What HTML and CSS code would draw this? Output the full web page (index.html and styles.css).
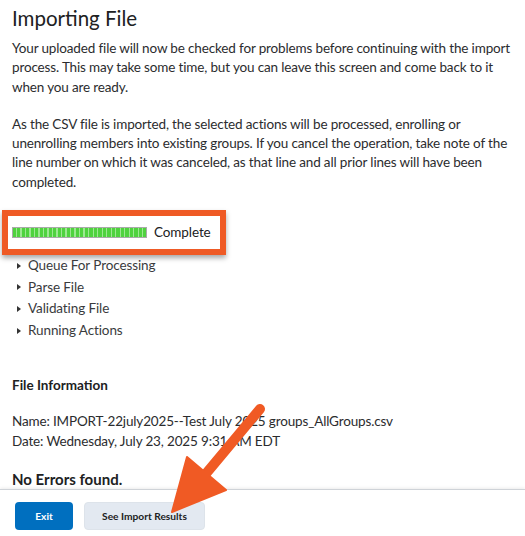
FILE: index.html
```html
<!DOCTYPE html>
<html>
<head>
<meta charset="utf-8">
<link rel="stylesheet" href="styles.css">
</head>
<body>
<div class="page">
  <main class="content">
    <h1 class="title">Importing File</h1>
    <p class="para">Your uploaded file will now be checked for problems before continuing with the import process. This may take some time, but you can leave this screen and come back to it when you are ready.</p>
    <p class="para para-2">As the CSV file is imported, the selected actions will be processed, enrolling or unenrolling members into existing groups. If you cancel the operation, take note of the line number on which it was canceled, as that line and all prior lines will have been completed.</p>
    <div class="status-box">
      <div class="progress"><div class="progress-fill"></div></div>
      <span class="status-text">Complete</span>
    </div>
    <ul class="steps">
      <li class="step"><span class="caret"></span>Queue For Processing</li>
      <li class="step"><span class="caret"></span>Parse File</li>
      <li class="step"><span class="caret"></span>Validating File</li>
      <li class="step"><span class="caret"></span>Running Actions</li>
    </ul>
    <h2 class="section-title">File Information</h2>
    <div class="info">
      <div class="info-line">Name: IMPORT-22july2025--Test July 2025 groups_AllGroups.csv</div>
      <div class="info-line">Date: Wednesday, July 23, 2025 9:31 AM EDT</div>
    </div>
    <h3 class="no-errors">No Errors found.</h3>
  </main>
  <footer class="footer">
    <button class="btn btn-primary">Exit</button>
    <button class="btn btn-secondary">See Import Results</button>
  </footer>
  <svg class="arrow" width="525" height="536" viewBox="0 0 525 536" aria-hidden="true">
    <line x1="260" y1="409" x2="204" y2="476" stroke="#f05a24" stroke-width="10" stroke-linecap="round"/>
    <polygon points="187,457 226,490 172,512" fill="#f05a24" stroke="#f05a24" stroke-width="2" stroke-linejoin="round"/>
  </svg>
</div>
</body>
</html>
```

FILE: styles.css
```css
html, body {
  margin: 0;
  padding: 0;
  background: #ffffff;
}

body {
  font-family: Lato, "Noto Sans", sans-serif;
  color: #2b2c2e;
  width: 525px;
  height: 536px;
  overflow: hidden;
}

.page {
  position: relative;
  width: 525px;
  height: 536px;
  display: flex;
  flex-direction: column;
}

.content {
  padding: 4px 12px 0 12px;
  flex: 1;
  min-height: 0;
}

.title {
  margin: 0;
  font-size: 20.5px;
  font-weight: 400;
  line-height: 28px;
  color: #202122;
}

.para {
  margin: 7px 0 0 0;
  font-size: 13.5px;
  letter-spacing: -0.15px;
  line-height: 19.3px;
}

.para-2 {
  margin-top: 18px;
}

.status-box {
  display: inline-flex;
  align-items: center;
  gap: 7px;
  margin: 18px 0 0 -10px;
  padding: 10px 9px 10px 4px;
  border: 6px solid #ef5a25;
  box-shadow: 0 3px 5px rgba(0, 0, 0, 0.35);
  background: #fff;
}

.progress {
  width: 133px;
  height: 9px;
  border: 1px solid #a9a9a9;
  background: #f4f4f4;
}

.progress-fill {
  width: 100%;
  height: 100%;
  background: repeating-linear-gradient(
    90deg,
    #4fd23e 0px,
    #4fd23e 3px,
    #9ce890 3px,
    #9ce890 4.5px
  );
}

.status-text {
  font-size: 13.5px;
  letter-spacing: -0.1px;
  line-height: 13px;
  color: #202122;
}

.steps {
  list-style: none;
  margin: 0;
  padding: 0 0 0 5px;
}

.step {
  display: flex;
  align-items: center;
  font-size: 13.5px;
  letter-spacing: -0.1px;
  line-height: 21.6px;
  color: #3a3b3d;
}

.caret {
  width: 0;
  height: 0;
  border-top: 3px solid transparent;
  border-bottom: 3px solid transparent;
  border-left: 4px solid #333;
  margin-right: 7px;
}

.section-title {
  margin: 35px 0 0 0;
  font-size: 13.5px;
  font-weight: 700;
  line-height: 19px;
  color: #202122;
}

.info {
  margin-top: 17px;
}

.info-line {
  font-size: 13.5px;
  letter-spacing: -0.15px;
  line-height: 19.3px;
}

.no-errors {
  margin: 19px 0 0 0;
  font-size: 15px;
  font-weight: 700;
  line-height: 19px;
  color: #202122;
}

.footer {
  flex: none;
  height: 47px;
  box-sizing: border-box;
  border-top: 1px solid #cfd3d8;
  box-shadow: 0 -1px 3px rgba(0, 0, 0, 0.08);
  display: flex;
  align-items: flex-start;
  gap: 11px;
  padding: 12px 15px 0 15px;
  background: #fff;
}

.btn {
  font-family: Lato, "Noto Sans", sans-serif;
  font-size: 10.2px;
  font-weight: 700;
  height: 28px;
  border-radius: 4px;
  border: none;
  padding: 0;
  cursor: pointer;
}

.btn-primary {
  width: 58px;
  background: #006fbf;
  color: #ffffff;
}

.btn-secondary {
  width: 121px;
  background: #e3e9f1;
  color: #202122;
  border: 1px solid #dde3ea;
}

.arrow {
  position: absolute;
  left: 0;
  top: 0;
  pointer-events: none;
}
```
